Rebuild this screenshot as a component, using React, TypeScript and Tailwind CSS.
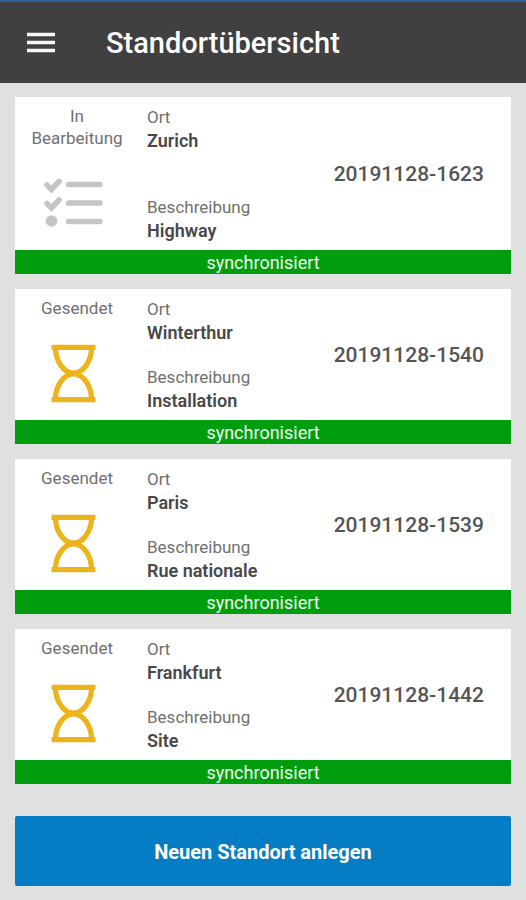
type Status = "In Bearbeitung" | "Gesendet";

interface Location {
  id: string;
  status: Status;
  place: string;
  description: string;
}

const locations: Location[] = [
  { id: "20191128-1623", status: "In Bearbeitung", place: "Zurich", description: "Highway" },
  { id: "20191128-1540", status: "Gesendet", place: "Winterthur", description: "Installation" },
  { id: "20191128-1539", status: "Gesendet", place: "Paris", description: "Rue nationale" },
  { id: "20191128-1442", status: "Gesendet", place: "Frankfurt", description: "Site" },
];

function MenuIcon() {
  return (
    <svg viewBox="0 0 28 22" className="w-7 h-[22px]" aria-hidden="true">
      <path d="M0 2.5h28M0 10.5h28M0 18.5h28" stroke="#f7f7f7" strokeWidth="3.4" />
    </svg>
  );
}

function ChecklistIcon() {
  return (
    <svg viewBox="0 0 60 60" className="w-[60px] h-[60px]" fill="none" stroke="#c5c5c5" aria-hidden="true">
      <path d="M4 12l4.500 4.500L16 8.500M4 30.500l4.500 4.500L16 27" strokeWidth="5.5" strokeLinecap="round" />
      <circle cx="8.5" cy="48" r="5.8" fill="#c5c5c5" stroke="none" />
      <path d="M25.500 11.500h31.500M25.500 30h31.500M25.500 48.500h31.500" strokeWidth="5.5" strokeLinecap="round" />
    </svg>
  );
}

function HourglassIcon() {
  return (
    <svg viewBox="0 0 60 60" className="w-[60px] h-[60px]" fill="none" stroke="#ecb31a" aria-hidden="true">
      <path d="M8.500 4.300h44M8.500 56.700h44" strokeWidth="5.2" />
      <path
        d="M12.500 5C12.500 17 20 30 30.500 30S48.500 17 48.500 5M12.500 56C12.500 44 20 31 30.500 31S48.500 44 48.500 56"
        strokeWidth="5.2"
      />
    </svg>
  );
}

function Field({ label, value }: { label: string; value: string }) {
  return (
    <div className="leading-6">
      <dt className="text-[17px] text-[#707070]">{label}</dt>
      <dd className="font-semibold text-[#484848]">{value}</dd>
    </div>
  );
}

function LocationCard({ location }: { location: Location }) {
  return (
    <li className="bg-white text-[18px]">
      <div className="flex pt-2 pb-[7px]">
        {/* Status */}
        <div className="flex w-[124px] shrink-0 flex-col items-center px-3">
          <p className="text-center text-[17px] leading-[22px] text-[#707070]">{location.status}</p>
          <div className="mt-6 mb-2.5 mr-2">
            {location.status === "Gesendet" ? <HourglassIcon /> : <ChecklistIcon />}
          </div>
        </div>

        <dl className="flex flex-1 flex-col justify-between pl-2">
          <Field label="Ort" value={location.place} />
          <Field label="Beschreibung" value={location.description} />
        </dl>

        <p className="self-center pt-0.5 pr-[27px] text-[21px] font-medium text-[#555555]">{location.id}</p>
      </div>
      <p className="bg-[#009d0e] pt-0.5 text-center leading-[22px] text-[#f0fff0]">synchronisiert</p>
    </li>
  );
}

export default function App() {
  return (
    <div className="min-h-screen bg-[#e0e0e0] font-['Roboto',sans-serif]">
      <header className="flex items-center gap-[51px] border-t-2 border-[#2d6096] bg-[#404040] px-[27px] h-[83px]">
        <button type="button" aria-label="Menü">
          <MenuIcon />
        </button>
        <h1 className="pt-0.5 text-[29px] font-medium text-white">Standortübersicht</h1>
      </header>

      <main className="px-[15px] pt-3.5 pb-3.5">
        <ul className="flex flex-col gap-[15px]">
          {locations.map((location) => (
            <LocationCard key={location.id} location={location} />
          ))}
        </ul>

        <button
          type="button"
          className="mt-8 h-[70px] w-full rounded-xs bg-[#057dc4] pt-0.5 text-[20px] font-bold text-white"
        >
          Neuen Standort anlegen
        </button>
      </main>
    </div>
  );
}
